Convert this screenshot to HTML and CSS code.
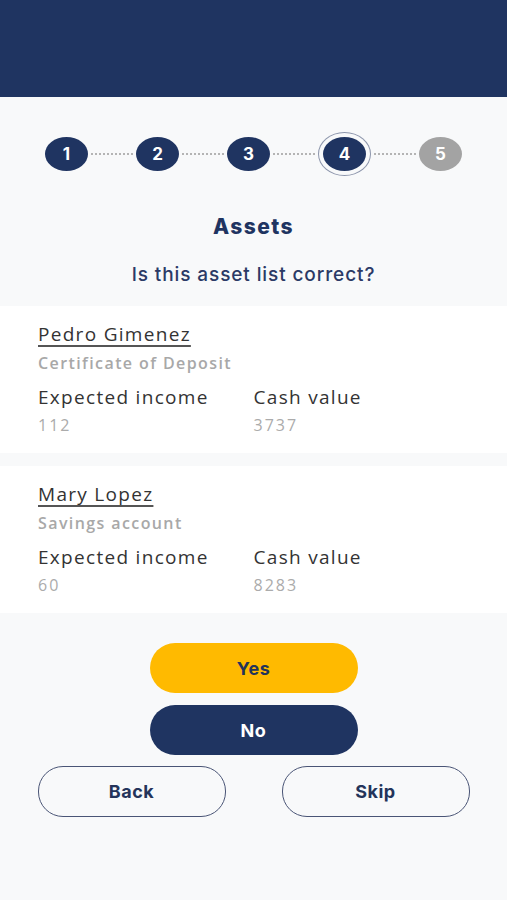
FILE: index.html
```html
<!DOCTYPE html>
<html lang="en">
<head>
  <meta charset="UTF-8">
  <meta name="viewport" content="width=device-width, initial-scale=1.0">
  <title>Assets</title>
  <link rel="stylesheet" href="styles.css">
</head>
<body>

  <div class="topbar"></div>

  <div class="steps">
    <div class="step">1</div>
    <div class="dots"></div>
    <div class="step">2</div>
    <div class="dots"></div>
    <div class="step">3</div>
    <div class="dots"></div>
    <div class="step current">4</div>
    <div class="dots"></div>
    <div class="step todo">5</div>
  </div>

  <h1 class="title">Assets</h1>
  <p class="question">Is this asset list correct?</p>

  <div class="asset">
    <h3 class="owner">Pedro Gimenez</h3>
    <p class="kind">Certificate of Deposit</p>
    <div class="figures">
      <div class="figure">
        <span class="label">Expected income</span>
        <span class="value">112</span>
      </div>
      <div class="figure">
        <span class="label">Cash value</span>
        <span class="value">3737</span>
      </div>
    </div>
  </div>

  <div class="asset">
    <h3 class="owner">Mary Lopez</h3>
    <p class="kind">Savings account</p>
    <div class="figures">
      <div class="figure">
        <span class="label">Expected income</span>
        <span class="value">60</span>
      </div>
      <div class="figure">
        <span class="label">Cash value</span>
        <span class="value">8283</span>
      </div>
    </div>
  </div>

  <div class="actions">
    <button class="btn yes">Yes</button>
    <button class="btn no">No</button>
    <div class="nav">
      <button class="btn outline">Back</button>
      <button class="btn outline">Skip</button>
    </div>
  </div>

</body>
</html>
```

FILE: styles.css
```css
body {
  margin: 0;
  background-color: #f8f9fa;
  font-family: "Open Sans", sans-serif;
  color: #333333;
}

.topbar {
  height: 97px;
  background-color: #1f3461;
}

.steps {
  display: flex;
  justify-content: center;
  align-items: center;
  padding-top: 37px;
  height: 40px;
}

.step {
  width: 43px;
  height: 34px;
  border-radius: 50%;
  background-color: #1f3461;
  color: white;
  font-family: "Inter", sans-serif;
  font-weight: 700;
  font-size: 17px;
  display: flex;
  align-items: center;
  justify-content: center;
}

.step.current {
  margin: 0 5px;
  box-shadow: 0 0 0 4px #f8f9fa, 0 0 0 5px #8c95ab;
}

.step.todo {
  background-color: #a3a3a3;
}

.dots {
  width: 42px;
  margin: 0 3px;
  border-top: 2px dotted #b4b4b4;
}

.title {
  margin: 39px 0 0;
  text-align: center;
  font-family: "Inter", sans-serif;
  font-size: 21px;
  line-height: 28px;
  font-weight: 800;
  letter-spacing: 1.4px;
  color: #1f3461;
}

.question {
  margin: 21px 0 0;
  text-align: center;
  font-family: "Inter", sans-serif;
  font-size: 19px;
  line-height: 26px;
  font-weight: 500;
  color: #2b3a66;
  letter-spacing: 0.9px;
}

.asset {
  background-color: white;
  margin-top: 18px;
  padding: 15px 38px 17px;
}

.asset + .asset {
  margin-top: 13px;
}

.owner {
  margin: 0;
  font-size: 19px;
  font-weight: 400;
  line-height: 26px;
  letter-spacing: 1.3px;
  text-decoration: underline;
  text-decoration-thickness: 1.5px;
  text-underline-offset: 4px;
  text-decoration-skip-ink: none;
  text-decoration-color: #555555;
}

.kind {
  margin: 5px 0 0;
  font-size: 16px;
  line-height: 22px;
  font-weight: 600;
  color: #a8a8a8;
  letter-spacing: 1.4px;
}

.figures {
  display: flex;
  margin-top: 10px;
}

.figure {
  display: flex;
  flex-direction: column;
  width: 217px;
}

.label {
  font-size: 19px;
  letter-spacing: 1.3px;
  line-height: 26px;
}

.value {
  margin-top: 4px;
  font-size: 16px;
  color: #ababab;
  letter-spacing: 2px;
  line-height: 22px;
}

.actions {
  display: flex;
  flex-direction: column;
  align-items: center;
  padding-top: 30px;
}

.btn {
  font-family: "Inter", sans-serif;
  font-size: 18px;
  font-weight: 700;
  letter-spacing: 0.5px;
  border-radius: 25px;
  height: 50px;
  border: none;
}

.yes {
  width: 208px;
  background-color: #ffba00;
  color: #24345a;
}

.no {
  width: 208px;
  margin-top: 12px;
  background-color: #1f3461;
  color: white;
}

.nav {
  display: flex;
  justify-content: space-between;
  width: 432px;
  margin-top: 11px;
}

.outline {
  width: 188px;
  height: 51px;
  background-color: transparent;
  border: 1.5px solid #4a5576;
  color: #24345a;
}
```
